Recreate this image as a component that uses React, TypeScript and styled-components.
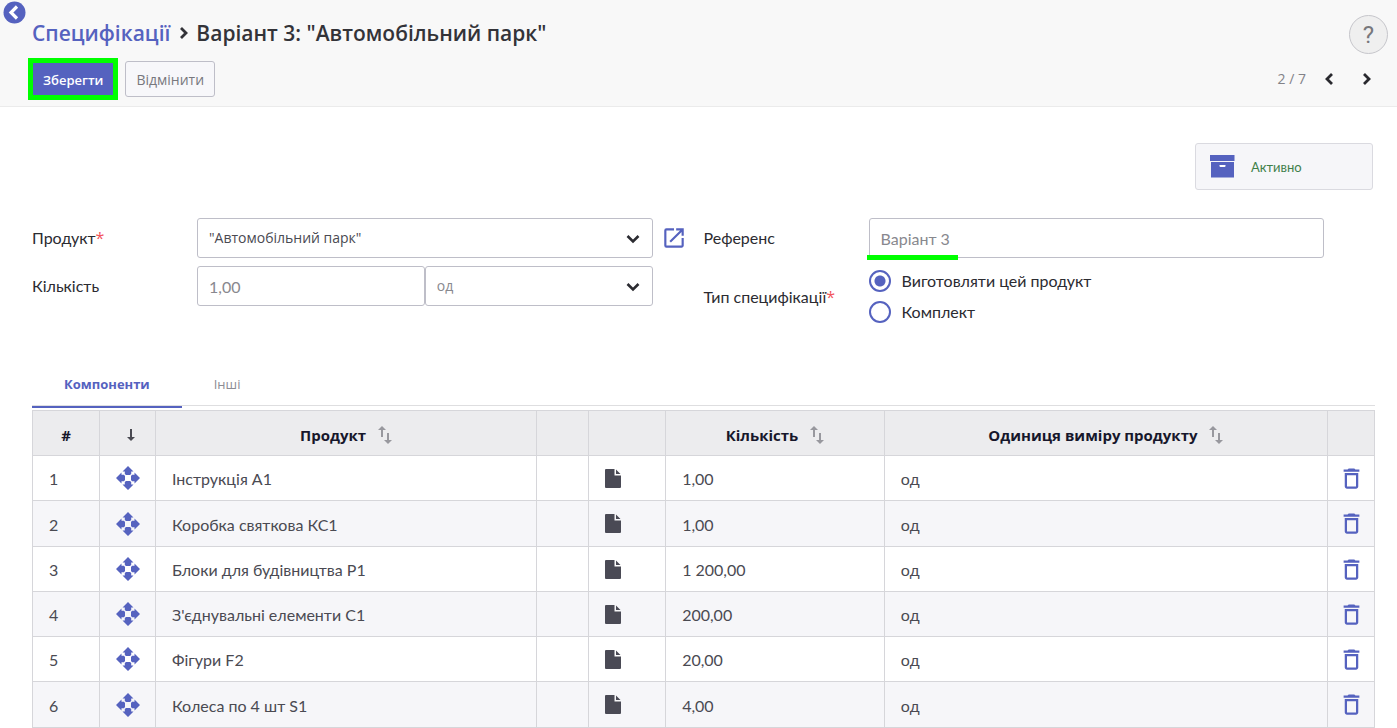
import React from 'react';
import styled, { createGlobalStyle, css } from 'styled-components';
import { MdDeleteOutline, MdOpenInNew } from 'react-icons/md';

const accent = '#5562bf';
const line = '#d6d6da';
const fieldLine = '#bebec8';
const wide = '"Open Sans", "Noto Sans", sans-serif';

const Global = createGlobalStyle`
  *, *::before, *::after { box-sizing: border-box; }
  body { margin: 0; background: #fff; color: #2b2b31; font: 16px/20px Lato, "Noto Sans", sans-serif; }
  button, input, select { font: inherit; }
  svg { display: block; flex: none; }
`;

const Header = styled.header`
  position: relative;
  display: grid;
  grid-template-columns: 1fr auto;
  row-gap: 4px;
  align-items: center;
  padding: 15px 9px 6px 28px;
  background: #f8f8f8;
  border-bottom: 1px solid #ebebeb;
  font-family: ${wide};
`;
const Collapse = styled.button`
  position: absolute;
  left: 3px;
  top: 1px;
  padding: 0;
  border: 0;
  background: none;
`;
const Crumbs = styled.h1`
  display: flex;
  align-items: center;
  gap: 6px;
  margin: 0;
  padding: 0 0 4px 4px;
  font-size: 21px;
  line-height: 28px;
  font-weight: 600;
  color: #333338;
`;
const CrumbLink = styled.a`
  color: ${accent};
  text-decoration: none;
`;
const Help = styled.button`
  justify-self: end;
  width: 39px;
  height: 39px;
  padding: 0;
  border: 1px solid #c6c6cb;
  border-radius: 50%;
  background: #efefef;
  color: #77777c;
  font-family: Roboto, sans-serif;
  font-size: 24px;
`;
const Actions = styled.div`
  display: flex;
  align-items: center;
  gap: 7px;
`;
const Mark = styled.span`
  display: flex;
  border: 5px solid #00ff00;
`;
const Button = styled.button<{ $primary?: boolean }>`
  height: 36px;
  padding: 2px 10px 0;
  border: 1px solid ${fieldLine};
  border-radius: 3px;
  background: #f7f7fa;
  color: #78787e;
  font-size: 14px;
  ${p => p.$primary && css`
    height: 32px;
    border: 0;
    border-radius: 0;
    background: ${accent};
    color: #fff;
    font-size: 13px;
    font-weight: 600;
  `}
`;
const Pager = styled.nav`
  display: flex;
  align-items: center;
  gap: 12px;
  padding-right: 10px;
  color: #828288;
  font-size: 14px;
`;
const PagerButton = styled.button`
  display: flex;
  justify-content: center;
  width: 24px;
  padding: 0;
  border: 0;
  background: none;
  color: #29292e;
`;

const Main = styled.main`
  padding: 36px 22px 0 32px;
`;
const Status = styled.button`
  display: flex;
  align-items: center;
  gap: 16px;
  width: 178px;
  height: 47px;
  margin: 0 2px 28px auto;
  padding: 0 14px;
  border: 1px solid #dadae0;
  border-radius: 3px;
  background: #f6f6f9;
  color: #3f8049;
  font-size: 13px;
`;
const Form = styled.form`
  display: grid;
  grid-template-columns: 1fr 1fr;
`;
const Column = styled.div`
  display: flex;
  flex-direction: column;
  gap: 8px;
`;
const Row = styled.div`
  display: grid;
  grid-template-columns: 165px 1fr 51px;
  align-items: center;
`;
const Label = styled.label`
  font-size: 16px;
`;
const Required = styled.span`
  color: #f2545b;
  font-family: ${wide};
`;
const controlStyle = css`
  width: 100%;
  height: 40px;
  border: 1px solid ${fieldLine};
  border-radius: 3px;
  background: #fff;
`;
const Input = styled.input`
  ${controlStyle}
  padding: 0 11px;
  color: #88888e;
  font-size: 16px;
`;
const SelectBox = styled.div`
  display: grid;
  align-items: center;
  & > * { grid-area: 1 / 1; }
  & > svg { justify-self: end; margin-right: 12px; pointer-events: none; }
`;
const Select = styled.select<{ $muted?: boolean }>`
  ${controlStyle}
  padding: 0 36px 0 11px;
  appearance: none;
  color: ${p => (p.$muted ? '#88888e' : '#4a4a52')};
  font-family: ${wide};
  font-size: 14px;
`;
const Split = styled.div`
  display: grid;
  grid-template-columns: 1fr 1fr;
`;
const OpenLink = styled.a`
  display: flex;
  padding-left: 8px;
  color: ${accent};
`;
const Underlined = styled.div`
  position: relative;
  &::after {
    content: '';
    position: absolute;
    left: -2px;
    bottom: -2px;
    width: 91px;
    height: 5px;
    background: #00ff00;
  }
`;
const Options = styled.div`
  display: flex;
  flex-direction: column;
  gap: 8px;
  padding: 3px 0 5px;
`;
const Option = styled.label`
  display: flex;
  align-items: center;
  gap: 11px;
  height: 23px;
  font-size: 16px;
`;
const Radio = styled.input`
  appearance: none;
  width: 22px;
  height: 22px;
  margin: 0;
  border: 2px solid ${accent};
  border-radius: 50%;
  &:checked { background: radial-gradient(circle, ${accent} 5px, #fff 6px); }
`;

const Tabs = styled.div`
  display: flex;
  margin-top: 33px;
  margin-bottom: 2px;
  height: 47px;
  align-items: flex-start;
  box-shadow: inset 0 -2px #fff, inset 0 -3px #dedee0;
`;
const Tab = styled.button<{ $active?: boolean }>`
  height: 47px;
  padding: 0 32px;
  border: 0;
  border-bottom: 2px solid ${p => (p.$active ? accent : 'transparent')};
  background: none;
  color: ${p => (p.$active ? accent : '#8c8c94')};
  font-family: ${wide};
  font-size: 13px;
  font-weight: ${p => (p.$active ? 700 : 400)};
`;

const Table = styled.table`
  width: 100%;
  table-layout: fixed;
  border-collapse: collapse;
`;
const HeadCell = styled.th<{ $width?: string }>`
  width: ${p => p.$width || 'auto'};
  height: 45px;
  padding: 4px 0 0;
  border: 1px solid ${line};
  background: #ececee;
  color: #17172b;
  font-family: ${wide};
  font-size: 15px;
  font-weight: 700;
`;
const HeadInner = styled.span`
  display: flex;
  justify-content: center;
  align-items: center;
  gap: 12px;
`;
const OrderMark = styled(HeadInner)`
  padding-left: 6px;
`;
const BodyRow = styled.tr`
  height: 45px;
  &:nth-child(even) { background: #f6f6f9; }
  &:nth-child(4n + 2) { height: 46px; }
`;
const Cell = styled.td`
  padding: 2px 16px 0;
  border: 1px solid ${line};
  color: #4a4a52;
  font-size: 16px;
`;
const IconCell = styled.td`
  padding: 0;
  border: 1px solid ${line};
`;
const IconButton = styled.button<{ $left?: boolean }>`
  display: flex;
  margin: ${p => (p.$left ? '0 0 0 16px' : '0 auto')};
  padding: 0;
  border: 0;
  background: none;
  color: ${accent};
`;

const Chevron = ({ dir }: { dir: 'left' | 'right' | 'down' }) => {
  const d = { left: 'M9 2 4 7l5 5', right: 'M5 2l5 5-5 5', down: 'M2.500 6 8 11.500 13.500 6' }[dir];
  const size = dir === 'down' ? 16 : 14;
  return (
    <svg width={size} height={size} viewBox={`0 0 ${size} ${size}`} fill="none" stroke="currentColor" strokeWidth={dir === 'down' ? 2.6 : 2.8}>
      <path d={d} />
    </svg>
  );
};
const SortIcon = () => (
  <svg width="14" height="18" viewBox="0 0 14 18" fill="#98989e">
    <path d="M4 0 8 4H5v7H3V4H0zM9 7h2v7h3l-4 4-4-4h3z" />
  </svg>
);
const MoveIcon = () => (
  <svg width="24" height="24" viewBox="0 0 24 24" fill={accent}>
    <path d="M12 0l5.500 5.500H15.200V8L14 9h-4L8.800 8V5.500H6.500zM12 24l-5.500-5.500H8.800V16L10 15h4l1.200 1v2.500h2.300zM0 12l5.500-5.500V8.800H8L9 10v4l-1 1.200H5.500v2.300zM24 12l-5.500 5.500V15.200H16L15 14v-4l1-1.200h2.500V6.500z" />
  </svg>
);
const FileIcon = () => (
  <svg width="16" height="19" viewBox="0 0 16 19" fill="#4a4a55">
    <path d="M1 0h8.500v6.500H16V18a1 1 0 0 1-1 1H1a1 1 0 0 1-1-1V1a1 1 0 0 1 1-1zM11 .5 15.500 5H11z" />
  </svg>
);

const rows = [
  ['Інструкція А1', '1,00'],
  ['Коробка святкова КС1', '1,00'],
  ['Блоки для будівництва Р1', '1 200,00'],
  ["З'єднувальні елементи С1", '200,00'],
  ['Фігури F2', '20,00'],
  ['Колеса по 4 шт S1', '4,00'],
];

export default function App() {
  return (
    <>
      <Global />
      <Header>
        <Collapse aria-label="Назад">
          <svg width="23" height="23" viewBox="0 0 23 23">
            <circle cx="11.500" cy="11.500" r="11" fill={accent} />
            <path d="M14 5.500 8 11.500l6 6" fill="none" stroke="#fff" strokeWidth="3.200" />
          </svg>
        </Collapse>
        <Crumbs>
          <CrumbLink href="#specs">Специфікації</CrumbLink>
          <Chevron dir="right" />
          <span>Варіант 3: "Автомобільний парк"</span>
        </Crumbs>
        <Help aria-label="Довідка">?</Help>
        <Actions>
          <Mark><Button $primary>Зберегти</Button></Mark>
          <Button>Відмінити</Button>
        </Actions>
        <Pager>
          <span>2 / 7</span>
          <PagerButton aria-label="Попередній"><Chevron dir="left" /></PagerButton>
          <PagerButton aria-label="Наступний"><Chevron dir="right" /></PagerButton>
        </Pager>
      </Header>
      <Main>
        <Status>
          <svg width="25" height="24" viewBox="0 0 25 24" fill={accent}>
            <path d="M0 0h24.500v6H0zM1 7h23v15.500H1z" />
            <path d="M9.500 10h6v1a1 1 0 0 1-1 1h-4a1 1 0 0 1-1-1z" fill="#fff" />
          </svg>
          Активно
        </Status>
        <Form>
          <Column>
            <Row>
              <Label htmlFor="product">Продукт<Required>*</Required></Label>
              <SelectBox>
                <Select id="product"><option>"Автомобільний парк"</option></Select>
                <Chevron dir="down" />
              </SelectBox>
              <OpenLink href="#product" aria-label="Відкрити продукт"><MdOpenInNew size={26} /></OpenLink>
            </Row>
            <Row>
              <Label htmlFor="qty">Кількість</Label>
              <Split>
                <Input id="qty" defaultValue="1,00" />
                <SelectBox>
                  <Select $muted aria-label="Одиниця"><option>од</option></Select>
                  <Chevron dir="down" />
                </SelectBox>
              </Split>
            </Row>
          </Column>
          <Column>
            <Row>
              <Label htmlFor="reference">Референс</Label>
              <Underlined><Input id="reference" defaultValue="Варіант 3" /></Underlined>
            </Row>
            <Row role="radiogroup" aria-labelledby="type">
              <Label as="span" id="type">Тип специфікації<Required>*</Required></Label>
              <Options>
                <Option><Radio type="radio" name="type" defaultChecked />Виготовляти цей продукт</Option>
                <Option><Radio type="radio" name="type" />Комплект</Option>
              </Options>
            </Row>
          </Column>
        </Form>
        <Tabs role="tablist">
          <Tab role="tab" aria-selected $active>Компоненти</Tab>
          <Tab role="tab" aria-selected={false}>Інші</Tab>
        </Tabs>
        <Table>
          <thead>
            <tr>
              <HeadCell $width="67px">#</HeadCell>
              <HeadCell $width="56px">
                <OrderMark>
                  <svg width="8" height="12" viewBox="0 0 8 12" fill="#4a4a52"><path d="M3 0h2v8h3l-4 4-4-4h3z" /></svg>
                </OrderMark>
              </HeadCell>
              <HeadCell $width="28.4%"><HeadInner>Продукт<SortIcon /></HeadInner></HeadCell>
              <HeadCell $width="52px" />
              <HeadCell $width="77px" />
              <HeadCell $width="16.3%"><HeadInner>Кількість<SortIcon /></HeadInner></HeadCell>
              <HeadCell><HeadInner>Одиниця виміру продукту<SortIcon /></HeadInner></HeadCell>
              <HeadCell $width="47px" />
            </tr>
          </thead>
          <tbody>
            {rows.map(([name, qty], i) => (
              <BodyRow key={name}>
                <Cell>{i + 1}</Cell>
                <IconCell><IconButton aria-label="Перемістити"><MoveIcon /></IconButton></IconCell>
                <Cell>{name}</Cell>
                <Cell />
                <IconCell><IconButton $left aria-label="Документ"><FileIcon /></IconButton></IconCell>
                <Cell>{qty}</Cell>
                <Cell>од</Cell>
                <IconCell><IconButton aria-label="Видалити"><MdDeleteOutline size={27} /></IconButton></IconCell>
              </BodyRow>
            ))}
          </tbody>
        </Table>
      </Main>
    </>
  );
}
